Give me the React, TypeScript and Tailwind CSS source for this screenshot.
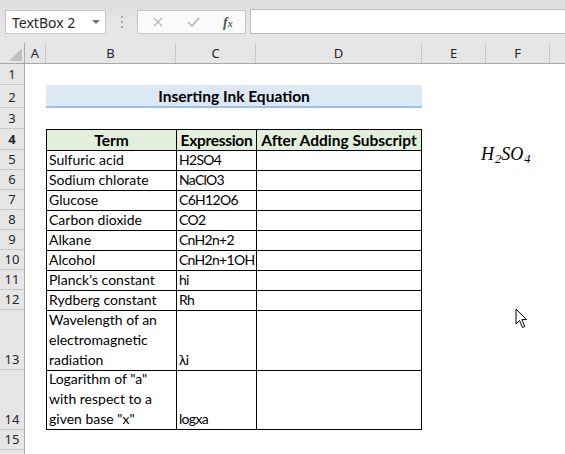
import React from 'react';

type Row = {
  n: number;
  h: string;
  term?: string[];
  expr?: string;
};

const cols = [
  { id: 'A', w: 'w-[21px]' },
  { id: 'B', w: 'w-[130px]' },
  { id: 'C', w: 'w-[80px]' },
  { id: 'D', w: 'w-[166px]' },
  { id: 'E', w: 'w-[64px]' },
  { id: 'F', w: 'w-[64px]' },
  { id: '', w: 'w-[64px]' },
];

const dataRows: Row[] = [
  { n: 5, h: 'h-[20px]', term: ['Sulfuric acid'], expr: 'H2SO4' },
  { n: 6, h: 'h-[20px]', term: ['Sodium chlorate'], expr: 'NaClO3' },
  { n: 7, h: 'h-[20px]', term: ['Glucose'], expr: 'C6H12O6' },
  { n: 8, h: 'h-[20px]', term: ['Carbon dioxide'], expr: 'CO2' },
  { n: 9, h: 'h-[20px]', term: ['Alkane'], expr: 'CnH2n+2' },
  { n: 10, h: 'h-[20px]', term: ['Alcohol'], expr: 'CnH2n+1OH' },
  { n: 11, h: 'h-[20px]', term: ["Planck's constant"], expr: 'hi' },
  { n: 12, h: 'h-[20px]', term: ['Rydberg constant'], expr: 'Rh' },
  { n: 13, h: 'h-[60px]', term: ['Wavelength of an', 'electromagnetic', 'radiation'], expr: 'λi' },
  { n: 14, h: 'h-[60px]', term: ['Logarithm of "a"', 'with respect to a', 'given base "x"'], expr: 'logxa' },
];

const RowHead = ({ n }: { n?: number }) => (
  <div className="w-[25px] shrink-0 bg-[#e6e6e6] border-r border-b border-r-[#ababab] border-b-[#c9c9c9] flex items-end justify-center text-[13px] leading-[19px] text-[#262626] font-['Noto_Sans',sans-serif]">
    {n}
  </div>
);

const Toolbar = () => (
  <div className="h-[43px] bg-gradient-to-b from-[#dcdcdc] via-[#e6e6e6] to-[#e6e6e6] flex items-start pt-[10px] font-['Noto_Sans',sans-serif]">
    <div className="ml-[5px] w-[101px] h-[24px] bg-white border border-[#c6c6c6] flex items-center justify-between pl-[6px] pr-[5px]">
      <span className="text-[14px] text-[#262626]">TextBox 2</span>
      <span className="w-0 h-0 border-l-[4px] border-r-[4px] border-t-[4px] border-l-transparent border-r-transparent border-t-[#707070]" />
    </div>
    <div className="w-[31px] h-[24px] flex flex-col items-center justify-center gap-[3px]">
      <span className="w-[2px] h-[2px] bg-[#a8a8a8]" />
      <span className="w-[2px] h-[2px] bg-[#a8a8a8]" />
      <span className="w-[2px] h-[2px] bg-[#a8a8a8]" />
    </div>
    <div className="w-[109px] h-[24px] bg-[#fafafa] border border-[#c6c6c6] flex items-center">
      <svg className="ml-[15px]" width="10" height="10" viewBox="0 0 10 10">
        <path d="M1 1 L9 9 M9 1 L1 9" stroke="#b8b8b8" strokeWidth="1.3" />
      </svg>
      <svg className="ml-[24px]" width="13" height="10" viewBox="0 0 13 10">
        <path d="M1 5 L5 9 L12 1" fill="none" stroke="#b8b8b8" strokeWidth="1.6" />
      </svg>
      <span className="ml-[23px] text-[14px] italic font-bold text-[#555] font-['Liberation_Serif',serif]">
        f<span className="text-[10px]">x</span>
      </span>
    </div>
    <div className="ml-[4px] flex-1 h-[25px] -mt-px bg-white border-y border-l border-[#bcbcbc]" />
  </div>
);

const ColHeads = () => (
  <div className="flex h-[21px] bg-[#e6e6e6] border-b border-[#a8a8a8] font-['Noto_Sans',sans-serif] text-[13px] text-[#262626]">
    <div className="relative w-[25px] shrink-0 border-r border-[#ababab]">
      <span className="absolute right-[2px] bottom-[2px] w-0 h-0 border-l-[13px] border-t-[13px] border-l-transparent border-t-transparent border-b-0 border-r-0 [border-bottom:13px_solid_#c0c0c0]" />
    </div>
    {cols.map((c, i) => (
      <div
        key={i}
        className={`${c.w} shrink-0 border-r border-[#c9c9c9] flex items-end justify-center leading-[20px]`}
      >
        {c.id}
      </div>
    ))}
  </div>
);

const Cell = ({ w, children, className = '' }: { w: string; children?: React.ReactNode; className?: string }) => (
  <div className={`${w} shrink-0 ${className}`}>{children}</div>
);

export default function App() {
  return (
    <div className="relative w-[565px] h-[454px] overflow-hidden bg-white select-none">
      <Toolbar />
      <ColHeads />
      <div className="font-['Lato',sans-serif] text-[14px] text-black leading-[20px]">
        {/* row 1 */}
        <div className="flex h-[21px]">
          <RowHead n={1} />
        </div>
        {/* row 2 - title */}
        <div className="flex h-[23px]">
          <RowHead n={2} />
          <Cell w="w-[21px]" />
          <div className="w-[376px] shrink-0 bg-[#dde8f5] border-b-2 border-[#9dc3e6] flex items-end justify-center font-bold text-[15.5px] leading-[20px]">
            Inserting Ink Equation
          </div>
        </div>
        {/* row 3 */}
        <div className="flex h-[21px]">
          <RowHead n={3} />
        </div>
        {/* row 4 - header */}
        <div className="flex h-[21px] text-[15.5px] font-bold">
          <RowHead n={4} />
          <Cell w="w-[21px]" />
          <Cell w="w-[130px]" className="bg-[#e2efda] border-l border-t border-black flex items-end justify-center">
            Term
          </Cell>
          <Cell w="w-[80px]" className="bg-[#e2efda] border-l border-t border-black flex items-end justify-center tracking-[-0.3px]">
            Expression
          </Cell>
          <Cell w="w-[166px]" className="bg-[#e2efda] border-l border-t border-r border-black flex items-end justify-center">
            After Adding Subscript
          </Cell>
        </div>
        {dataRows.map((r, i) => {
          const last = i === dataRows.length - 1 ? 'border-b' : '';
          return (
            <div key={r.n} className={`flex ${r.h}`}>
              <RowHead n={r.n} />
              <Cell w="w-[21px]" />
              <Cell w="w-[130px]" className={`border-l border-t border-black flex flex-col justify-end px-[2px] whitespace-nowrap ${last}`}>
                {r.term?.map((t) => (
                  <span key={t}>{t}</span>
                ))}
              </Cell>
              <Cell w="w-[80px]" className={`border-l border-t border-black flex items-end px-[2px] tracking-[-0.7px] whitespace-nowrap ${last}`}>
                {r.expr}
              </Cell>
              <Cell w="w-[166px]" className={`border-l border-t border-r border-black ${last}`} />
            </div>
          );
        })}
        <div className="flex h-[20px]">
          <RowHead n={15} />
        </div>
        <div className="flex h-[20px]">
          <RowHead />
        </div>
      </div>

      {/* ink equation object */}
      <div className="absolute left-[481px] top-[141px] font-['Liberation_Serif',serif] italic text-[18px] text-black">
        H<sub className="text-[12.5px] ml-[1px]">2</sub>SO<sub className="text-[12.5px] ml-[1px]">4</sub>
      </div>

      {/* mouse pointer */}
      <svg className="absolute left-[515px] top-[308px]" width="14" height="21" viewBox="0 0 14 21">
        <path d="M1 1 L1 16 L4.5 12.5 L7.5 19.5 L9.8 18.5 L6.8 11.6 L11.5 11.6 Z" fill="white" stroke="black" strokeWidth="1" strokeLinejoin="round" />
      </svg>
    </div>
  );
}
